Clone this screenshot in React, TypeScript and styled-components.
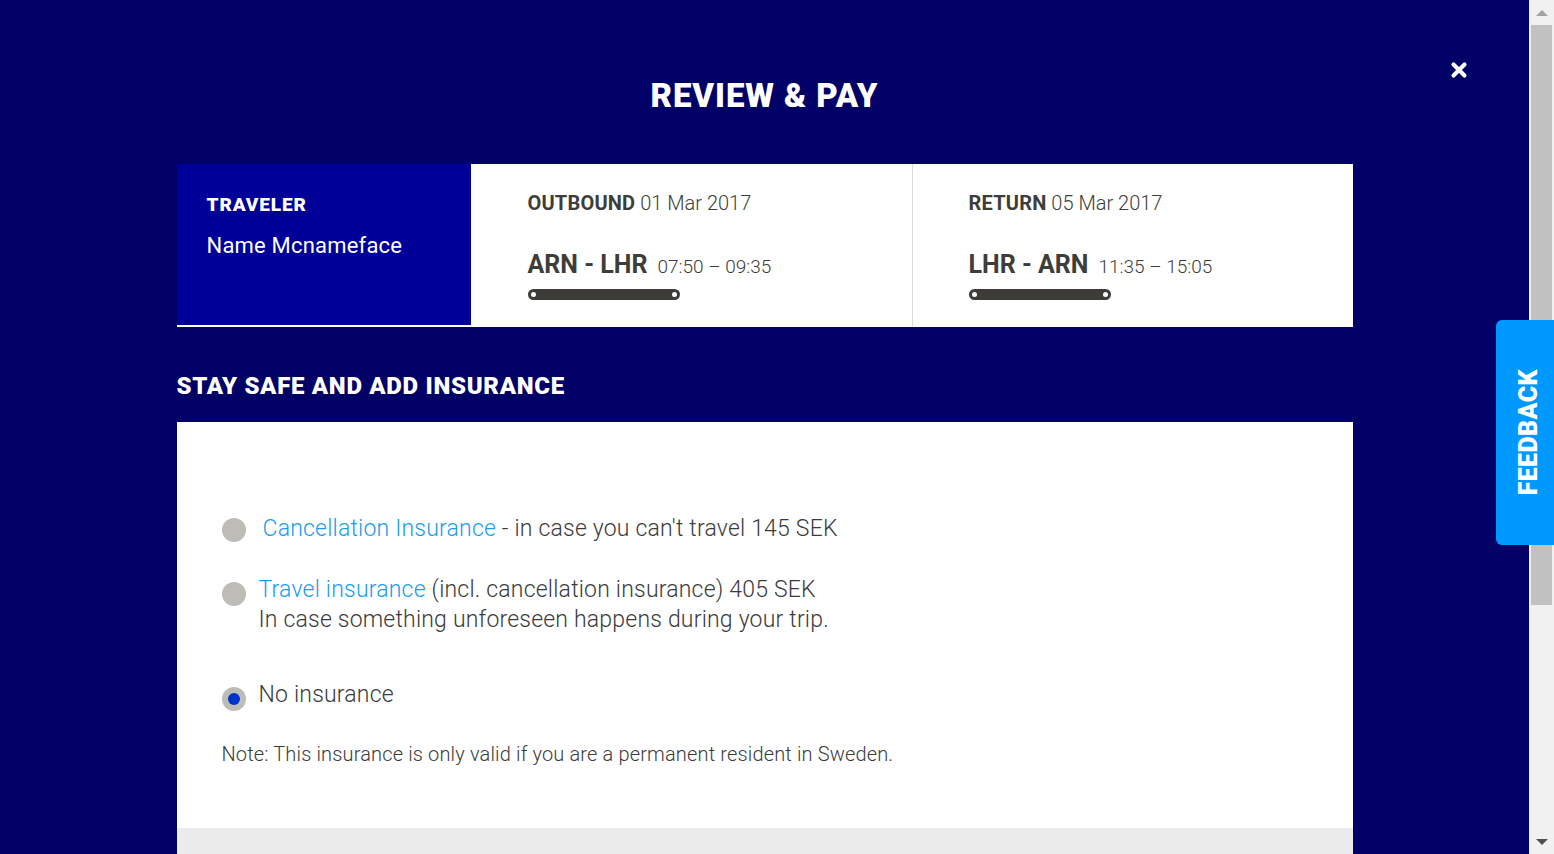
import React from "react";
import styled, { createGlobalStyle } from "styled-components";
import { X } from "lucide-react";

const GlobalStyle = createGlobalStyle`
  html, body {
    margin: 0;
    padding: 0;
    height: 100%;
    overflow: hidden;
    background: #000066;
    font-family: Roboto, "Liberation Sans", sans-serif;
  }
  #root {
    height: 100%;
  }
`;

const Shell = styled.div`
  display: flex;
  height: 100vh;
`;

const Main = styled.main`
  position: relative;
  flex: 1;
  display: flex;
  flex-direction: column;
  align-items: center;
  overflow: hidden;
`;

const Title = styled.h1`
  margin: 76px 0 0;
  font-size: 33px;
  line-height: 40px;
  font-weight: 900;
  color: #fff;
  letter-spacing: 0.9px;
`;

const CloseButton = styled.button`
  position: absolute;
  top: 59px;
  right: 59px;
  padding: 0;
  border: 0;
  background: none;
  color: #fff;
  display: flex;
  cursor: pointer;
`;

const Content = styled.div`
  width: 1176px;
  display: flex;
  flex-direction: column;
`;

const TripCard = styled.section`
  margin-top: 48px;
  display: grid;
  grid-template-columns: 294px 1fr 1fr;
  height: 163px;
  background: #fff;
`;

const TravelerPanel = styled.div`
  height: 161px;
  box-sizing: border-box;
  padding: 29px 30px 0;
  background: #000099;
  color: #fff;
`;

const Label = styled.div`
  font-size: 19px;
  line-height: 24px;
  font-weight: 900;
  letter-spacing: 0.9px;
`;

const TravelerName = styled.div`
  margin-top: 15px;
  font-size: 22px;
  line-height: 28px;
  font-weight: 400;
  letter-spacing: 0.2px;
`;

const FlightPanel = styled.div<{ $divider?: boolean }>`
  box-sizing: border-box;
  padding: 27px 0 0 ${(p) => (p.$divider ? 56 : 57)}px;
  color: #3d3d3a;
  border-left: ${(p) => (p.$divider ? "1px solid #dcdcdc" : "0")};
`;

const FlightDate = styled.div`
  font-size: 20px;
  line-height: 24px;
  font-weight: 300;

  strong {
    font-weight: 700;
    letter-spacing: 0.2px;
  }
`;

const RouteLine = styled.div`
  margin-top: 35px;
  display: flex;
  align-items: baseline;
  gap: 10px;
  line-height: 30px;
`;

const Route = styled.span`
  font-size: 25px;
  font-weight: 700;
`;

const Times = styled.span`
  font-size: 19px;
  font-weight: 300;
`;

const DurationBar = styled.div<{ $width: number }>`
  position: relative;
  margin-top: 7px;
  width: ${(p) => p.$width}px;
  height: 11px;
  border-radius: 6px;
  background: #3d3c38;

  &::before,
  &::after {
    content: "";
    position: absolute;
    top: 3px;
    width: 5px;
    height: 5px;
    border-radius: 50%;
    background: #fff;
  }
  &::before {
    left: 3px;
  }
  &::after {
    right: 3px;
  }
`;

const SectionHeading = styled.h2`
  margin: 44px 0 21px;
  font-size: 24px;
  line-height: 30px;
  font-weight: 900;
  color: #fff;
  letter-spacing: 0.7px;
`;

const InsurancePanel = styled.section`
  height: 406px;
  box-sizing: border-box;
  padding: 92px 45px 0;
  background: #fff;
  color: #3b3b3b;
`;

const Option = styled.label<{ $gap: number; $top: number }>`
  display: flex;
  align-items: flex-start;
  gap: ${(p) => p.$gap}px;
  margin-top: ${(p) => p.$top}px;
  font-size: 23px;
  line-height: 30px;
  font-weight: 300;
  letter-spacing: 0.2px;
  cursor: pointer;
`;

const Radio = styled.span<{ $checked?: boolean; $offset: number }>`
  flex: none;
  margin-top: ${(p) => p.$offset}px;
  width: 24px;
  height: 24px;
  border-radius: 50%;
  background: #bebcb6;
  display: flex;
  align-items: center;
  justify-content: center;

  &::after {
    content: "";
    width: 12px;
    height: 12px;
    border-radius: 50%;
    background: ${(p) => (p.$checked ? "#0033cc" : "transparent")};
  }
`;

const Link = styled.a`
  color: #1a9cf0;
  text-decoration: none;
`;

const Note = styled.p`
  margin: 31px 0 0;
  font-size: 20px;
  line-height: 24px;
  font-weight: 300;
  letter-spacing: 0.15px;
  color: #3b3b3b;
`;

const Footer = styled.div`
  height: 60px;
  background: #ebebeb;
`;

const FeedbackTab = styled.button`
  position: fixed;
  top: 320px;
  right: 0;
  width: 58px;
  height: 225px;
  padding: 0 0 0 6px;
  border: 0;
  border-radius: 6px 0 0 6px;
  background: #0099ff;
  color: #fff;
  font-family: Roboto, "Liberation Sans", sans-serif;
  font-size: 25px;
  font-weight: 900;
  letter-spacing: 0.4px;
  display: flex;
  align-items: center;
  justify-content: center;
  cursor: pointer;

  span {
    writing-mode: vertical-rl;
    transform: rotate(180deg);
  }
`;

const ScrollRail = styled.div`
  flex: none;
  width: 25px;
  background: #f1f1f1;
  display: flex;
  flex-direction: column;
  align-items: center;
`;

const Arrow = styled.div<{ $down?: boolean }>`
  flex: none;
  height: 25px;
  display: flex;
  align-items: center;
  justify-content: center;

  &::after {
    content: "";
    border-left: 6px solid transparent;
    border-right: 6px solid transparent;
    ${(p) =>
      p.$down
        ? "border-top: 6px solid #505050;"
        : "border-bottom: 6px solid #a3a3a3;"}
  }
`;

const Thumb = styled.div`
  width: 21px;
  height: 580px;
  background: #c1c1c1;
`;

const Track = styled.div`
  flex: 1;
`;

export default function App() {
  return (
    <>
      <GlobalStyle />
      <Shell>
        <Main>
          <Title>REVIEW &amp; PAY</Title>
          <CloseButton aria-label="Close">
            <X size={22} strokeWidth={4.5} />
          </CloseButton>
          <Content>
            <TripCard>
              <TravelerPanel>
                <Label>TRAVELER</Label>
                <TravelerName>Name Mcnameface</TravelerName>
              </TravelerPanel>
              <FlightPanel>
                <FlightDate>
                  <strong>OUTBOUND</strong> 01 Mar 2017
                </FlightDate>
                <RouteLine>
                  <Route>ARN - LHR</Route>
                  <Times>07:50 – 09:35</Times>
                </RouteLine>
                <DurationBar $width={152} />
              </FlightPanel>
              <FlightPanel $divider>
                <FlightDate>
                  <strong>RETURN</strong> 05 Mar 2017
                </FlightDate>
                <RouteLine>
                  <Route>LHR - ARN</Route>
                  <Times>11:35 – 15:05</Times>
                </RouteLine>
                <DurationBar $width={142} />
              </FlightPanel>
            </TripCard>

            <SectionHeading>STAY SAFE AND ADD INSURANCE</SectionHeading>

            <InsurancePanel>
              <Option $gap={17} $top={0}>
                <Radio $offset={4} />
                <span>
                  <Link href="#">Cancellation Insurance</Link> - in case you
                  can't travel 145 SEK
                </span>
              </Option>
              <Option $gap={13} $top={31}>
                <Radio $offset={7} />
                <span>
                  <Link href="#">Travel insurance</Link> (incl. cancellation
                  insurance) 405 SEK
                  <br />
                  In case something unforeseen happens during your trip.
                </span>
              </Option>
              <Option $gap={13} $top={45}>
                <Radio $checked $offset={7} />
                <span>No insurance</span>
              </Option>
              <Note>
                Note: This insurance is only valid if you are a permanent
                resident in Sweden.
              </Note>
            </InsurancePanel>
            <Footer />
          </Content>
        </Main>
        <ScrollRail>
          <Arrow />
          <Thumb />
          <Track />
          <Arrow $down />
        </ScrollRail>
      </Shell>
      <FeedbackTab>
        <span>FEEDBACK</span>
      </FeedbackTab>
    </>
  );
}
